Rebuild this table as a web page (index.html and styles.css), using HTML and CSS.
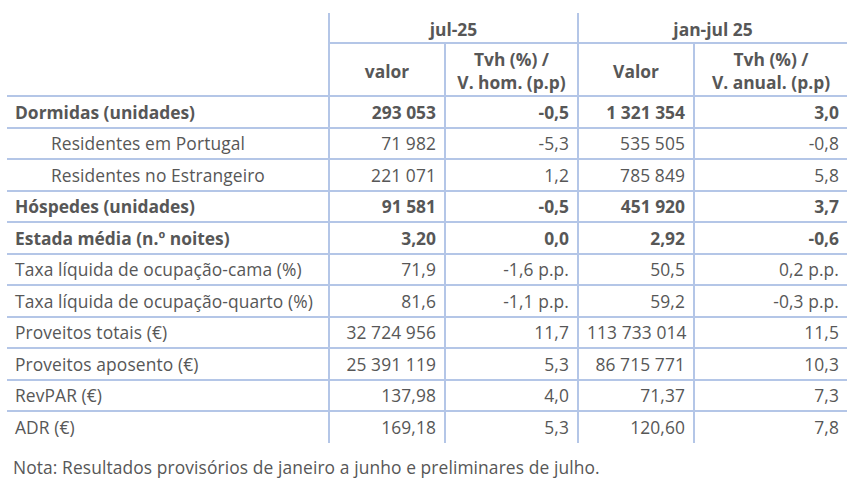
FILE: index.html
```html
<!DOCTYPE html>
<html lang="pt">
<head>
<meta charset="utf-8">
<link rel="stylesheet" href="styles.css">
</head>
<body>
<div class="page">
<table class="tbl">
  <colgroup>
    <col class="c1"><col class="c2"><col class="c3"><col class="c4"><col class="c5">
  </colgroup>
  <thead>
    <tr class="grp">
      <th class="blank"></th>
      <th colspan="2" class="gh">jul-25</th>
      <th colspan="2" class="gh">jan-jul 25</th>
    </tr>
    <tr class="sub">
      <th class="blank2"></th>
      <th>valor</th>
      <th>Tvh (%) /<br>V. hom. (p.p)</th>
      <th>Valor</th>
      <th>Tvh (%) /<br>V. anual. (p.p)</th>
    </tr>
  </thead>
  <tbody>
    <tr class="b"><td class="lab">Dormidas (unidades)</td><td>293 053</td><td>-0,5</td><td>1 321 354</td><td>3,0</td></tr>
    <tr><td class="lab ind">Residentes em Portugal</td><td>71 982</td><td>-5,3</td><td>535 505</td><td>-0,8</td></tr>
    <tr><td class="lab ind">Residentes no Estrangeiro</td><td>221 071</td><td>1,2</td><td>785 849</td><td>5,8</td></tr>
    <tr class="b"><td class="lab">Hóspedes (unidades)</td><td>91 581</td><td>-0,5</td><td>451 920</td><td>3,7</td></tr>
    <tr class="b"><td class="lab">Estada média (n.º noites)</td><td>3,20</td><td>0,0</td><td>2,92</td><td>-0,6</td></tr>
    <tr><td class="lab">Taxa líquida de ocupação-cama (%)</td><td>71,9</td><td>-1,6 p.p.</td><td>50,5</td><td>0,2 p.p.</td></tr>
    <tr><td class="lab">Taxa líquida de ocupação-quarto (%)</td><td>81,6</td><td>-1,1 p.p.</td><td>59,2</td><td>-0,3 p.p.</td></tr>
    <tr><td class="lab">Proveitos totais (€)</td><td>32 724 956</td><td>11,7</td><td>113 733 014</td><td>11,5</td></tr>
    <tr><td class="lab">Proveitos aposento (€)</td><td>25 391 119</td><td>5,3</td><td>86 715 771</td><td>10,3</td></tr>
    <tr><td class="lab">RevPAR (€)</td><td>137,98</td><td>4,0</td><td>71,37</td><td>7,3</td></tr>
    <tr class="last"><td class="lab">ADR (€)</td><td>169,18</td><td>5,3</td><td>120,60</td><td>7,8</td></tr>
  </tbody>
</table>
<p class="note">Nota: Resultados provisórios de janeiro a junho e preliminares de julho.</p>
</div>
</body>
</html>
```

FILE: styles.css
```css
html, body {
  margin: 0;
  padding: 0;
  background: #ffffff;
}
body {
  font-family: "Open Sans", "Liberation Sans", sans-serif;
  color: #575757;
  font-size: 17.4px;
  letter-spacing: 0.1px;
}
.page {
  padding: 13px 0 0 7px;
}
.tbl {
  border-collapse: collapse;
  table-layout: fixed;
  width: 840px;
}
.c1 { width: 322px; }
.c2 { width: 116px; }
.c3 { width: 133px; }
.c4 { width: 116px; }
.c5 { width: 153px; }

.tbl th, .tbl td {
  box-sizing: border-box;
  padding: 0 8px;
  border: 0 solid #b4c6e7;
  white-space: nowrap;
  overflow: visible;
}
.tbl th {
  font-weight: 700;
  letter-spacing: 0;
  text-align: center;
  border-left-width: 2px;
}
.tbl th.blank, .tbl th.blank2 {
  border-left-width: 0;
}
.grp th {
  height: 30px;
  line-height: 22px;
  padding-top: 3px;
  vertical-align: middle;
}
.grp th.gh {
  border-bottom-width: 2px;
}
.sub th {
  height: 53px;
  line-height: 23px;
  padding-top: 3px;
  border-bottom-width: 2px;
}
.tbl td {
  height: 31.5px;
  line-height: 22px;
  text-align: right;
  border-left-width: 2px;
  border-bottom-width: 2px;
}
.tbl td.lab {
  text-align: left;
  border-left-width: 0;
}
.tbl td.ind {
  padding-left: 44px;
}
.tbl tr.b td {
  font-weight: 700;
  letter-spacing: 0;
}
.tbl tr.last td {
  border-bottom-width: 0;
}
.note {
  margin: 12px 0 0 6px;
  line-height: 24px;
}
```
